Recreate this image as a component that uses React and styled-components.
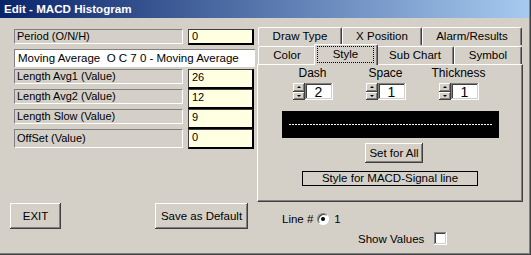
import React from 'react';
import styled, { createGlobalStyle, css } from 'styled-components';

const GlobalStyle = createGlobalStyle`
  html, body {
    margin: 0;
    padding: 0;
    background: #d4d0c8;
  }
  body {
    font-family: "Liberation Sans", Arial, sans-serif;
    font-size: 11px;
    color: #000;
  }
`;

const raised = css`
  background: #d4d0c8;
  box-shadow: inset -1px -1px #404040, inset 1px 1px #fff,
    inset -2px -2px #808080, inset 2px 2px #d4d0c8;
`;

const sunkenField = css`
  background: #fff;
  box-shadow: inset -1px -1px #fff, inset 1px 1px #808080,
    inset -2px -2px #d4d0c8, inset 2px 2px #404040;
`;

const Window = styled.div`
  width: 531px;
  height: 255px;
  box-sizing: border-box;
  background: #d4d0c8;
  border-right: 1px solid #404040;
  border-bottom: 1px solid #404040;
  box-shadow: inset -1px -1px #808080;
  display: flex;
  flex-direction: column;
`;

const TitleBar = styled.div`
  height: 18px;
  flex: none;
  margin-right: 1px;
  padding-left: 4px;
  background: linear-gradient(to right, #0a246a, #a6caf0);
  color: #fff;
  font-weight: bold;
  font-size: 11.6px;
  line-height: 18px;
`;

const Body = styled.div`
  flex: 1;
  display: flex;
`;

const LeftCol = styled.div`
  width: 257px;
  box-sizing: border-box;
  padding: 11px 2px 0 10px;
  display: flex;
  flex-direction: column;
`;

const Form = styled.div`
  margin-left: 4px;
  width: 241px;
  display: flex;
  flex-direction: column;
`;

const Row = styled.div`
  height: 20px;
  display: flex;
  align-items: flex-start;
  gap: 5px;
`;

const Label = styled.div`
  width: 169px;
  height: ${(p) => (p.$tall ? 19 : 15)}px;
  box-sizing: border-box;
  border-top: 1px solid #808080;
  border-left: 1px solid #808080;
  border-bottom: 1px solid #fff;
  border-right: 1px solid #fff;
  padding-left: 2px;
  line-height: ${(p) => (p.$tall ? 17 : 13)}px;
  white-space: nowrap;
`;

const Field = styled.div`
  width: 66px;
  height: ${(p) => (p.$short ? 16 : 20)}px;
  box-sizing: border-box;
  background: #ffffe1;
  border: 1px solid #404040;
  border-right: 2px solid #000;
  border-bottom: 2px solid #000;
  padding-left: 3px;
  line-height: ${(p) => (p.$short ? 13 : 15)}px;
`;

const Combo = styled.div`
  width: 241px;
  height: 18px;
  box-sizing: border-box;
  background: #fff;
  border-top: 1px solid #808080;
  border-left: 1px solid #808080;
  padding-left: 3px;
  line-height: 17px;
  font-size: 11.5px;
  white-space: pre;
`;

const ButtonRow = styled.div`
  margin-top: 54px;
  width: 238px;
  display: flex;
  justify-content: space-between;
`;

const Button = styled.div`
  ${raised};
  width: ${(p) => p.$w}px;
  height: ${(p) => p.$h}px;
  display: flex;
  align-items: center;
  justify-content: center;
  font-size: 11.5px;
  flex: none;
`;

const RightCol = styled.div`
  width: 266px;
  padding-top: 9px;
  display: flex;
  flex-direction: column;
`;

const TabRow = styled.div`
  display: flex;
  align-items: flex-end;
  padding-left: 1px;
  height: ${(p) => p.$h}px;
`;

const Tab = styled.div`
  position: relative;
  width: ${(p) => p.$w + (p.$active ? 4 : 0)}px;
  height: ${(p) => (p.$active ? 21 : 18)}px;
  margin: 0 ${(p) => (p.$active ? -2 : 0)}px ${(p) => (p.$active ? -1 : 0)}px;
  z-index: ${(p) => (p.$active ? 2 : 1)};
  box-sizing: border-box;
  background: #d4d0c8;
  border-top: 1px solid #fff;
  border-left: 1px solid #fff;
  border-right: 1px solid #404040;
  border-radius: 2px 2px 0 0;
  box-shadow: inset -1px 0 #808080;
  display: flex;
  align-items: ${(p) => (p.$active ? 'stretch' : 'center')};
  justify-content: center;
  padding: ${(p) => (p.$active ? '1px 3px 2px 2px' : '0 0 1px')};
  font-size: 11.5px;
  flex: none;
`;

const Focus = styled.span`
  flex: 1;
  border: 1px dotted #000;
  display: flex;
  align-items: center;
  justify-content: center;
  padding-bottom: 2px;
`;

const Panel = styled.div`
  width: 266px;
  height: 138px;
  box-sizing: border-box;
  border-top: 1px solid #fff;
  border-left: 1px solid #fff;
  border-right: 1px solid #404040;
  border-bottom: 1px solid #404040;
  box-shadow: inset -1px -1px #808080;
  display: flex;
  flex-direction: column;
  align-items: center;
  padding-top: 2px;
`;

const SpinRow = styled.div`
  align-self: flex-start;
  margin-left: 18px;
  display: grid;
  grid-template-columns: repeat(3, 73px);
`;

const SpinGroup = styled.div`
  display: flex;
  flex-direction: column;
  align-items: center;
  gap: 3px;
`;

const SpinLabel = styled.div`
  font-size: 12px;
  line-height: 13px;
`;

const Spinner = styled.div`
  display: flex;
`;

const SpinButtons = styled.div`
  width: 12px;
  height: 17px;
  display: flex;
  flex-direction: column;
`;

const SpinBtn = styled.div`
  ${raised};
  flex: 1;
  display: flex;
  align-items: center;
  justify-content: center;
  &::after {
    content: '';
    border-left: 2px solid transparent;
    border-right: 2px solid transparent;
    ${(p) =>
      p.$up
        ? 'border-bottom: 2px solid #000;'
        : 'border-top: 2px solid #000;'}
  }
`;

const SpinInput = styled.div`
  ${sunkenField};
  width: 28px;
  height: 17px;
  display: flex;
  align-items: center;
  justify-content: center;
  font-size: 14px;
`;

const Preview = styled.div`
  margin-top: 11px;
  width: 217px;
  height: 27px;
  background: #000;
  display: flex;
  align-items: center;
`;

const DashLine = styled.div`
  flex: 1;
  height: 1px;
  margin: 0 6px 0 7px;
  background: repeating-linear-gradient(
    to right,
    #fff 0 2px,
    transparent 2px 3px
  );
`;

const SetAll = styled(Button)`
  margin: 5px 0 0 8px;
`;

const Caption = styled.div`
  margin-top: 8px;
  width: 176px;
  height: 15px;
  box-sizing: border-box;
  border: 1px solid #000;
  text-align: center;
  line-height: 13px;
  font-size: 11.5px;
`;

const LineRow = styled.div`
  margin: 10px 0 0 25px;
  display: flex;
  align-items: center;
  height: 13px;
  font-size: 11.5px;
`;

const Radio = styled.span`
  width: 12px;
  height: 12px;
  margin: 0 5px 0 4px;
  box-sizing: border-box;
  border-radius: 50%;
  background: #fff;
  border: 1px solid;
  border-color: #808080 #fff #fff #808080;
  box-shadow: inset 1px 1px #404040;
  display: flex;
  align-items: center;
  justify-content: center;
  &::after {
    content: '';
    width: 4px;
    height: 4px;
    border-radius: 50%;
    background: #000;
  }
`;

const ShowRow = styled.div`
  margin: 7px 0 0 101px;
  display: flex;
  align-items: center;
  gap: 10px;
  font-size: 11.5px;
`;

const Check = styled.span`
  ${sunkenField};
  width: 13px;
  height: 13px;
`;

const rows = [
  { label: 'Length Avg1 (Value)', value: '26' },
  { label: 'Length Avg2 (Value)', value: '12' },
  { label: 'Length Slow (Value)', value: '9' },
];

const topTabs = [
  { name: 'Draw Type', w: 84 },
  { name: 'X Position', w: 80 },
  { name: 'Alarm/Results', w: 100 },
];

const frontTabs = [
  { name: 'Color', w: 58 },
  { name: 'Style', w: 60, active: true },
  { name: 'Sub Chart', w: 78 },
  { name: 'Symbol', w: 68 },
];

const spins = [
  { label: 'Dash', value: '2' },
  { label: 'Space', value: '1' },
  { label: 'Thickness', value: '1' },
];

const App = () => (
  <>
    <GlobalStyle />
    <Window>
      <TitleBar>Edit - MACD Histogram</TitleBar>
      <Body>
        <LeftCol>
          <Form>
            <Row>
              <Label>Period (O/N/H)</Label>
              <Field $short>0</Field>
            </Row>
            <Row>
              <Combo>Moving Average  O C 7 0 - Moving Average</Combo>
            </Row>
            {rows.map((r) => (
              <Row key={r.label}>
                <Label>{r.label}</Label>
                <Field>{r.value}</Field>
              </Row>
            ))}
            <Row>
              <Label $tall>OffSet (Value)</Label>
              <Field>0</Field>
            </Row>
          </Form>
          <ButtonRow>
            <Button $w={51} $h={26}>EXIT</Button>
            <Button $w={93} $h={26}>Save as Default</Button>
          </ButtonRow>
        </LeftCol>
        <RightCol>
          <TabRow $h={18}>
            {topTabs.map((t) => (
              <Tab key={t.name} $w={t.w}>{t.name}</Tab>
            ))}
          </TabRow>
          <TabRow $h={19}>
            {frontTabs.map((t) =>
              t.active ? (
                <Tab key={t.name} $w={t.w} $active>
                  <Focus>{t.name}</Focus>
                </Tab>
              ) : (
                <Tab key={t.name} $w={t.w}>{t.name}</Tab>
              )
            )}
          </TabRow>
          <Panel>
            <SpinRow>
              {spins.map((s) => (
                <SpinGroup key={s.label}>
                  <SpinLabel>{s.label}</SpinLabel>
                  <Spinner>
                    <SpinButtons>
                      <SpinBtn $up />
                      <SpinBtn />
                    </SpinButtons>
                    <SpinInput>{s.value}</SpinInput>
                  </Spinner>
                </SpinGroup>
              ))}
            </SpinRow>
            <Preview>
              <DashLine />
            </Preview>
            <SetAll $w={58} $h={20}>Set for All</SetAll>
            <Caption>Style for MACD-Signal line</Caption>
          </Panel>
          <LineRow>
            Line #
            <Radio />
            1
          </LineRow>
          <ShowRow>
            Show Values
            <Check />
          </ShowRow>
        </RightCol>
      </Body>
    </Window>
  </>
);

export default App;
